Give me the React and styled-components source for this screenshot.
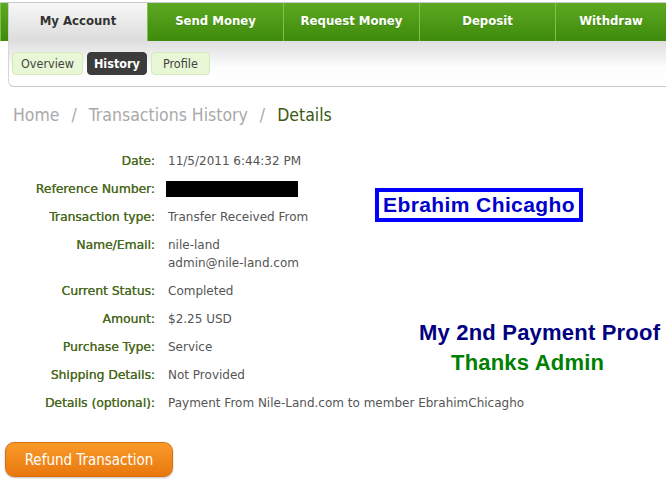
import styled, { createGlobalStyle } from "styled-components";

const Global = createGlobalStyle`
  html, body {
    margin: 0;
    padding: 0;
    background: #fff;
    width: 666px;
    height: 487px;
    overflow: hidden;
  }
  body {
    font-family: "DejaVu Sans", Verdana, sans-serif;
  }
`;

const Page = styled.div`
  width: 666px;
  padding-top: 2px;
`;

const TabBar = styled.div`
  display: flex;
  height: 38px;
  border-top: 1px solid #c9c9c9;
  background: linear-gradient(#5ea922, #3e8a0b);
`;

const Tab = styled.div`
  flex: 0 0 ${(p) => p.$w}px;
  display: flex;
  align-items: center;
  justify-content: center;
  padding-bottom: 3px;
  box-sizing: border-box;
  font-family: "DejaVu Sans Condensed", "DejaVu Sans", sans-serif;
  font-size: 13px;
  font-weight: bold;
  color: #fff;
  border-left: 1px solid #7fc24a;
  text-shadow: 0 1px 0 rgba(0, 0, 0, 0.15);
  ${(p) =>
    p.$active &&
    `
    color: #333;
    text-shadow: none;
    border-left: 1px solid #cfcfcf;
    background: linear-gradient(#f7f7f7, #dcdcdc);
  `}
`;

const SubPanel = styled.div`
  margin-left: 8px;
  height: 46px;
  box-sizing: border-box;
  border-left: 1px solid #d6d6d6;
  border-bottom: 1px solid #c8c8c8;
  border-bottom-left-radius: 6px;
  background: linear-gradient(#dedede, #fdfdfd 60%, #fff);
  display: flex;
  align-items: center;
  gap: 4px;
  padding: 0 0 1px 3px;
`;

const Pill = styled.div`
  height: 23px;
  box-sizing: border-box;
  padding: 0 ${(p) => p.$pad}px;
  display: flex;
  align-items: center;
  border-radius: 4px;
  font-family: "DejaVu Sans Condensed", "DejaVu Sans", sans-serif;
  font-size: 12.5px;
  color: #444;
  background: #e8f7d6;
  border: 1px solid #d4e9bd;
  ${(p) =>
    p.$active &&
    `
    background: #3c3c3c;
    border-color: #3c3c3c;
    color: #fff;
    font-weight: bold;
  `}
`;

const Crumbs = styled.div`
  display: flex;
  gap: 12px;
  padding: 13px 0 0 13px;
  font-family: "DejaVu Sans Condensed", "DejaVu Sans", sans-serif;
  font-size: 17.5px;
  color: #a9a9a9;
  height: 30px;
  align-items: center;
`;

const Current = styled.span`
  color: #3c5a12;
`;

const Details = styled.div`
  position: relative;
  margin-top: 22px;
  display: grid;
  grid-template-columns: 155px 1fr;
  column-gap: 13px;
  font-size: 12px;
  line-height: 18px;
`;

const Label = styled.div`
  text-align: right;
  font-size: 12.3px;
  color: #4a6a1e;
  text-shadow: 0.25px 0 0 #4a6a1e;
  padding-bottom: 10px;
`;

const Value = styled.div`
  color: #555;
  padding-bottom: 10px;
`;

const Redacted = styled.div`
  width: 132px;
  height: 16px;
  margin: 1px 0 0 -2px;
  background: #000;
`;

const NameTag = styled.div`
  position: absolute;
  left: 375px;
  top: 36px;
  width: 208px;
  height: 34px;
  box-sizing: border-box;
  border: 4px solid #0000ff;
  display: flex;
  align-items: center;
  justify-content: center;
  font-family: "Liberation Sans", Arial, sans-serif;
  font-weight: bold;
  font-size: 21px;
  color: #0000cc;
  letter-spacing: 0.4px;
`;

const Note = styled.div`
  position: absolute;
  left: ${(p) => p.$x}px;
  top: ${(p) => p.$y}px;
  font-family: "Liberation Sans", Arial, sans-serif;
  font-weight: bold;
  font-size: 22px;
  color: ${(p) => p.$color};
  letter-spacing: 0.2px;
  white-space: nowrap;
`;

const RefundButton = styled.button`
  margin: 20px 0 0 5px;
  width: 168px;
  height: 35px;
  border: 1px solid #d8700e;
  border-radius: 9px;
  background: linear-gradient(#f99a2a, #e9780e);
  color: #fff;
  font-family: "DejaVu Sans Condensed", "DejaVu Sans", sans-serif;
  font-size: 15px;
  box-shadow: 0 1px 2px rgba(0, 0, 0, 0.25);
`;

const rows = [
  ["Date:", "11/5/2011 6:44:32 PM"],
  ["Reference Number:", null],
  ["Transaction type:", "Transfer Received From"],
  ["Name/Email:", ["nile-land", "admin@nile-land.com"]],
  ["Current Status:", "Completed"],
  ["Amount:", "$2.25 USD"],
  ["Purchase Type:", "Service"],
  ["Shipping Details:", "Not Provided"],
  ["Details (optional):", "Payment From Nile-Land.com to member EbrahimChicagho"],
];

export default function App() {
  return (
    <Page>
      <Global />
      <TabBar>
        <Tab $w={8} />
        <Tab $w={139} $active>
          My Account
        </Tab>
        <Tab $w={136}>Send Money</Tab>
        <Tab $w={136}>Request Money</Tab>
        <Tab $w={136}>Deposit</Tab>
        <Tab $w={111}>Withdraw</Tab>
      </TabBar>
      <SubPanel>
        <Pill $pad={8}>Overview</Pill>
        <Pill $pad={6} $active>
          History
        </Pill>
        <Pill $pad={11}>Profile</Pill>
      </SubPanel>
      <Crumbs>
        <span>Home</span>
        <span>/</span>
        <span>Transactions History</span>
        <span>/</span>
        <Current>Details</Current>
      </Crumbs>
      <Details>
        {rows.map(([label, value]) => (
          <>
            <Label key={label}>{label}</Label>
            <Value>
              {value === null ? (
                <Redacted />
              ) : Array.isArray(value) ? (
                value.map((v) => <div key={v}>{v}</div>)
              ) : (
                value
              )}
            </Value>
          </>
        ))}
        <NameTag>Ebrahim Chicagho</NameTag>
        <Note $x={419} $y={172} $color="#000080">
          My 2nd Payment Proof
        </Note>
        <Note $x={451} $y={202} $color="#008000">
          Thanks Admin
        </Note>
      </Details>
      <RefundButton>Refund Transaction</RefundButton>
    </Page>
  );
}
